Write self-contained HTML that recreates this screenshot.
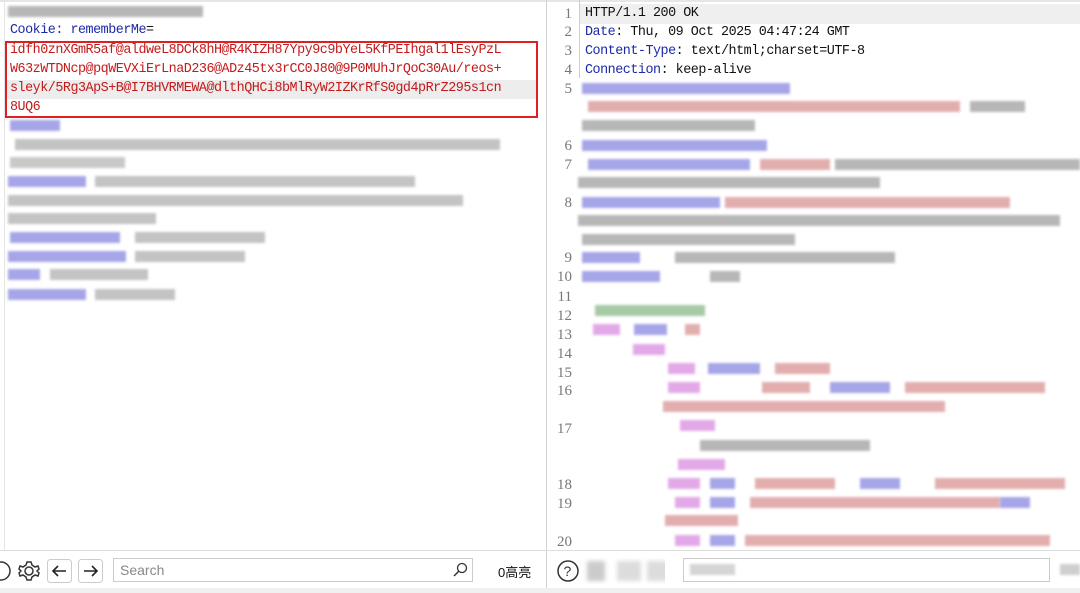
<!DOCTYPE html>
<html><head><meta charset="utf-8"><style>
body{margin:0;width:1080px;height:593px;background:#fff;position:relative;overflow:hidden;font-family:"Liberation Mono",monospace;font-size:13.4px;letter-spacing:-0.48px;}
.t{position:absolute;white-space:pre;line-height:19px;color:#111;}
.b{position:absolute;height:11px;filter:blur(1.2px);opacity:.6}
.g{background:#888}.bl{background:#6a6ad8}.r{background:#d07878}.m{background:#d070d8}.gr{background:#6aa86a}
.ln{position:absolute;left:548px;width:24px;text-align:right;color:#777;font-family:"Liberation Serif",serif;font-size:15px;letter-spacing:0;line-height:19px}
.k{color:#1c2aa8}
.rd{color:#c41a1a}
</style></head><body>
<div style="position:absolute;left:0;top:0;width:1080px;height:2px;background:#e6e6e6"></div>
<div style="position:absolute;left:546px;top:0;width:1px;height:593px;background:#d0d0d0"></div>
<div style="position:absolute;left:4px;top:0;width:1px;height:550px;background:#e4e4e4"></div>
<!-- left -->
<div class="b g" style="left:8px;top:6px;width:195px"></div>
<div class="t" style="left:10px;top:21px"><span class="k">Cookie: rememberMe</span>=</div>
<div style="position:absolute;left:7px;top:80px;width:530px;height:19px;background:#ededed"></div>
<div class="t rd" style="left:10px;top:41px">idfh0znXGmR5af@aldweL8DCk8hH@R4KIZH87Ypy9c9bYeL5KfPEIhgal1lEsyPzL
W63zWTDNcp@pqWEVXiErLnaD236@ADz45tx3rCC0J80@9P0MUhJrQoC30Au/reos+
sleyk/5Rg3ApS+B@I7BHVRMEWA@dlthQHCi8bMlRyW2IZKrRfS0gd4pRrZ295s1cn
8UQ6</div>
<div style="position:absolute;left:5px;top:41px;width:529px;height:73px;border:2px solid #e02020"></div>
<div class="b bl" style="left:10px;top:120px;width:50px"></div>
<div class="b g" style="left:15px;top:139px;width:485px;opacity:.5"></div>
<div class="b g" style="left:10px;top:157px;width:115px;opacity:.45"></div>
<div class="b bl" style="left:8px;top:176px;width:78px"></div>
<div class="b g" style="left:95px;top:176px;width:320px;opacity:.5"></div>
<div class="b g" style="left:8px;top:195px;width:455px;opacity:.5"></div>
<div class="b g" style="left:8px;top:213px;width:148px;opacity:.5"></div>
<div class="b bl" style="left:10px;top:232px;width:110px"></div>
<div class="b g" style="left:135px;top:232px;width:130px;opacity:.5"></div>
<div class="b bl" style="left:8px;top:251px;width:118px"></div>
<div class="b g" style="left:135px;top:251px;width:110px;opacity:.5"></div>
<div class="b bl" style="left:8px;top:269px;width:32px"></div>
<div class="b g" style="left:50px;top:269px;width:98px;opacity:.5"></div>
<div class="b bl" style="left:8px;top:289px;width:78px"></div>
<div class="b g" style="left:95px;top:289px;width:80px;opacity:.5"></div>
<!-- right -->
<div style="position:absolute;left:580px;top:4px;width:500px;height:20px;background:#efefef"></div>
<div style="position:absolute;left:579px;top:0;width:1px;height:78px;background:#ccc"></div>
<div class="ln" style="top:5px">1</div><div class="ln" style="top:23px">2</div><div class="ln" style="top:42px">3</div><div class="ln" style="top:61px">4</div>
<div class="ln" style="top:80px">5</div><div class="ln" style="top:137px">6</div><div class="ln" style="top:156px">7</div><div class="ln" style="top:194px">8</div>
<div class="ln" style="top:249px">9</div><div class="ln" style="top:268px">10</div><div class="ln" style="top:288px">11</div><div class="ln" style="top:307px">12</div>
<div class="ln" style="top:326px">13</div><div class="ln" style="top:345px">14</div><div class="ln" style="top:364px">15</div><div class="ln" style="top:382px">16</div>
<div class="ln" style="top:420px">17</div><div class="ln" style="top:476px">18</div><div class="ln" style="top:495px">19</div><div class="ln" style="top:533px">20</div>
<div class="t" style="left:585px;top:4px">HTTP/1.1 200 OK
<span class="k">Date</span>: Thu, 09 Oct 2025 04:47:24 GMT
<span class="k">Content-Type</span>: text/html;charset=UTF-8
<span class="k">Connection</span>: keep-alive</div>
<div class="b bl" style="left:582px;top:83px;width:208px"></div>
<div class="b r" style="left:588px;top:101px;width:372px"></div>
<div class="b g" style="left:970px;top:101px;width:55px"></div>
<div class="b g" style="left:582px;top:120px;width:173px"></div>
<div class="b bl" style="left:582px;top:140px;width:185px"></div>
<div class="b bl" style="left:588px;top:159px;width:162px"></div>
<div class="b r" style="left:760px;top:159px;width:70px"></div>
<div class="b g" style="left:835px;top:159px;width:245px"></div>
<div class="b g" style="left:578px;top:177px;width:302px"></div>
<div class="b bl" style="left:582px;top:197px;width:138px"></div>
<div class="b r" style="left:725px;top:197px;width:285px"></div>
<div class="b g" style="left:578px;top:215px;width:482px"></div>
<div class="b g" style="left:582px;top:234px;width:213px"></div>
<div class="b bl" style="left:582px;top:252px;width:58px"></div>
<div class="b g" style="left:675px;top:252px;width:220px"></div>
<div class="b bl" style="left:582px;top:271px;width:78px"></div>
<div class="b g" style="left:710px;top:271px;width:30px"></div>
<div class="b gr" style="left:595px;top:305px;width:110px"></div>
<div class="b m" style="left:593px;top:324px;width:27px"></div>
<div class="b bl" style="left:634px;top:324px;width:33px"></div>
<div class="b r" style="left:685px;top:324px;width:15px"></div>
<div class="b m" style="left:633px;top:344px;width:32px"></div>
<div class="b m" style="left:668px;top:363px;width:27px"></div>
<div class="b bl" style="left:708px;top:363px;width:52px"></div>
<div class="b r" style="left:775px;top:363px;width:55px"></div>
<div class="b m" style="left:668px;top:382px;width:32px"></div>
<div class="b r" style="left:762px;top:382px;width:48px"></div>
<div class="b bl" style="left:830px;top:382px;width:60px"></div>
<div class="b r" style="left:905px;top:382px;width:140px"></div>
<div class="b r" style="left:663px;top:401px;width:282px"></div>
<div class="b m" style="left:680px;top:420px;width:35px"></div>
<div class="b g" style="left:700px;top:440px;width:170px"></div>
<div class="b m" style="left:678px;top:459px;width:47px"></div>
<div class="b m" style="left:668px;top:478px;width:32px"></div>
<div class="b bl" style="left:710px;top:478px;width:25px"></div>
<div class="b r" style="left:755px;top:478px;width:80px"></div>
<div class="b bl" style="left:860px;top:478px;width:40px"></div>
<div class="b r" style="left:935px;top:478px;width:130px"></div>
<div class="b m" style="left:675px;top:497px;width:25px"></div>
<div class="b bl" style="left:710px;top:497px;width:25px"></div>
<div class="b r" style="left:750px;top:497px;width:250px"></div>
<div class="b bl" style="left:1000px;top:497px;width:30px"></div>
<div class="b r" style="left:665px;top:515px;width:73px"></div>
<div class="b m" style="left:675px;top:535px;width:25px"></div>
<div class="b bl" style="left:710px;top:535px;width:25px"></div>
<div class="b r" style="left:745px;top:535px;width:305px"></div>
<!-- toolbars -->
<div style="position:absolute;left:0;top:550px;width:1080px;height:1px;background:#ddd"></div>
<div style="position:absolute;left:0;top:588px;width:1080px;height:5px;background:#f0f0f0"></div>
<svg style="position:absolute;left:0;top:558px" width="110" height="26">
<circle cx="1" cy="13" r="9" fill="none" stroke="#333" stroke-width="1.5"/>
<g transform="translate(29,13)" fill="none" stroke="#333" stroke-width="1.5"><circle r="4"/><path d="M-2,-9 L2,-9 L3,-6 L6,-4 L9,-5 L10,-2 L8,0 L10,2 L9,5 L6,4 L3,6 L2,9 L-2,9 L-3,6 L-6,4 L-9,5 L-10,2 L-8,0 L-10,-2 L-9,-5 L-6,-4 L-3,-6Z"/></g>
<rect x="47.5" y="1.5" width="24" height="23" rx="3" fill="#fff" stroke="#ccc"/>
<path d="M66,13H53M58,8l-5,5 5,5" fill="none" stroke="#222" stroke-width="1.6"/>
<rect x="78.5" y="1.5" width="24" height="23" rx="3" fill="#fff" stroke="#ccc"/>
<path d="M84,13H97M92,8l5,5-5,5" fill="none" stroke="#222" stroke-width="1.6"/>
</svg>
<div style="position:absolute;left:113px;top:558px;width:360px;height:24px;border:1px solid #ccc;box-sizing:border-box;font-family:'Liberation Sans',sans-serif;font-size:14px;letter-spacing:0;color:#888;line-height:22px;padding-left:6px">Search</div>
<svg style="position:absolute;left:452px;top:562px" width="16" height="16"><circle cx="10" cy="6" r="4.5" fill="none" stroke="#333" stroke-width="1.3"/><path d="M7,9L2,14" stroke="#333" stroke-width="1.5"/></svg>
<div style="position:absolute;left:498px;top:562px;font-family:'Liberation Sans','Noto Sans CJK SC',sans-serif;font-size:13px;letter-spacing:0;color:#111">0高亮</div>
<svg style="position:absolute;left:555px;top:558px" width="110" height="26">
<circle cx="13" cy="13" r="10" fill="none" stroke="#333" stroke-width="1.5"/><text x="8.5" y="18" font-size="14" font-family="Liberation Sans" fill="#333">?</text>
<rect x="32" y="3" width="18" height="20" fill="#999" opacity=".5" style="filter:blur(2px)"/>
<rect x="62" y="3" width="24" height="20" fill="#aaa" opacity=".4" style="filter:blur(2px)"/>
<rect x="92" y="3" width="24" height="20" fill="#aaa" opacity=".4" style="filter:blur(2px)"/>
</svg>
<div style="position:absolute;left:683px;top:558px;width:367px;height:24px;border:1px solid #ccc;box-sizing:border-box"></div>
<div class="b g" style="left:690px;top:564px;width:45px;opacity:.35"></div>
<div class="b g" style="left:1060px;top:564px;width:20px;opacity:.4"></div>
</body></html>
